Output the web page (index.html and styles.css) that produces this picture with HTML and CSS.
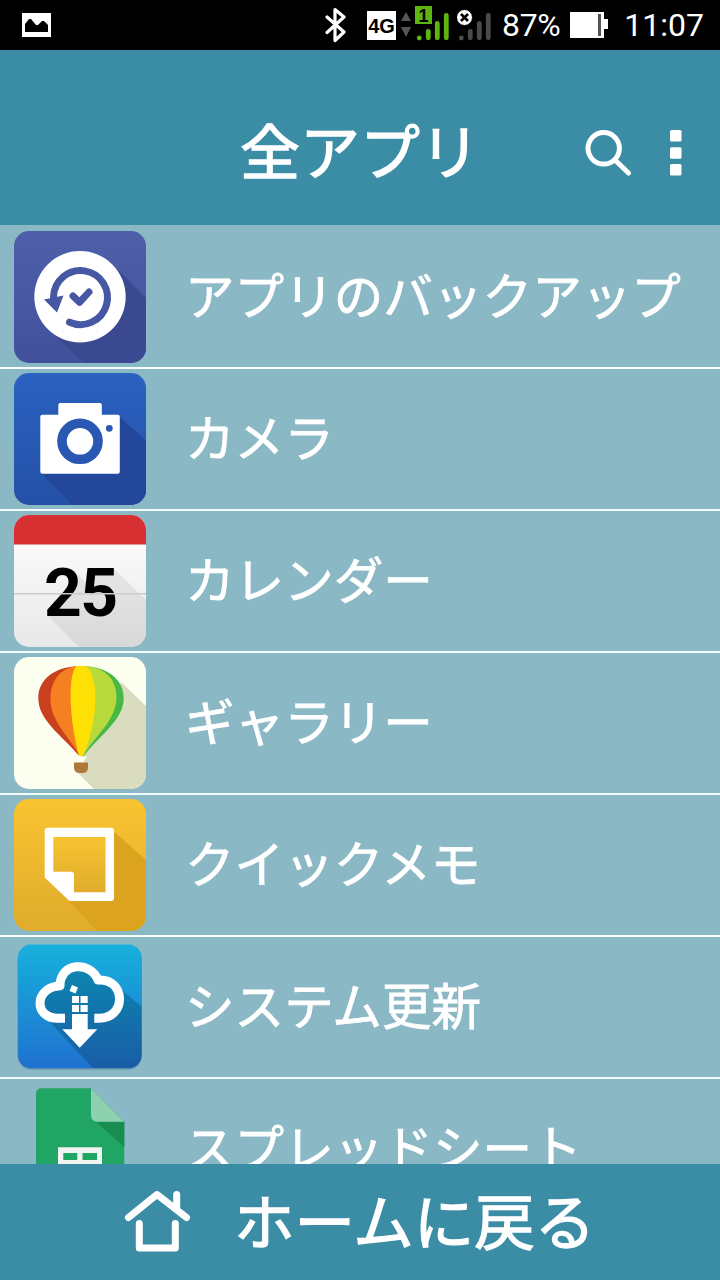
FILE: index.html
```html
<!DOCTYPE html>
<html lang="ja">
<head>
    <meta charset="UTF-8">
    <meta name="viewport" content="width=device-width, initial-scale=1.0">
    <title>全アプリ</title>
    <link rel="stylesheet" href="styles.css">
</head>
<body>
    <!-- Status bar -->
    <div class="status-bar">
        <svg class="picture-icon" width="29" height="24" viewBox="0 0 29 24">
            <path fill="#fff" fill-rule="evenodd" d="M0 0h29v24H0zM3 19h23v-7l-4-4h-2l-4 4h-2L9 6H7l-4 5z"/>
        </svg>
        <svg class="bluetooth-icon" width="22" height="36" viewBox="0 0 22 36">
            <path fill="none" stroke="#fff" stroke-width="3.2" stroke-linecap="round" stroke-linejoin="round" d="M2 10l17 15-9 8.500V2.500L19 10 2 25.500"/>
        </svg>
        <span class="network">4G</span>
        <svg class="arrows-icon" width="10" height="26" viewBox="0 0 10 26">
            <path fill="#555" d="M5 0l5 9H0zM0 15h10l-5 10z"/>
        </svg>
        <svg class="signal-icon" width="35" height="36" viewBox="0 0 35 36">
            <g stroke="#5fb50f" stroke-width="4.800" stroke-linecap="round">
                <path d="M4.300 31.800v.2M13.300 25.300v6.500M22.300 17.300v14.500M31.300 9.300v22.500"/>
            </g>
            <path fill="#5fb50f" d="M0 0h17v18H0z"/>
            <text class="sim-number" x="3.500" y="15.500">1</text>
        </svg>
        <svg class="signal-icon no-signal" width="35" height="36" viewBox="0 0 35 36">
            <g stroke="#4b4b4b" stroke-width="4.800" stroke-linecap="round">
                <path d="M4.300 31.800v.2M13.300 25.300v6.500M22.300 17.300v14.500M31.300 9.300v22.500"/>
            </g>
            <circle cx="7.500" cy="11.500" r="8" fill="#fff" stroke="#000"/>
            <path stroke="#000" stroke-width="2.600" d="M4 8l7 7M11 8l-7 7"/>
        </svg>
        <span class="percent">87%</span>
        <svg class="battery-icon" width="38" height="26" viewBox="0 0 38 26">
            <path fill="#fff" d="M0 0h34v7h4v10h-4v9H0z"/>
            <path fill="#555" d="M28 2h3v22h-3z"/>
        </svg>
        <span class="clock">11:07</span>
    </div>

    <!-- Page header with search and menu -->
    <header class="header">
        <h1>全アプリ</h1>
        <div class="actions">
            <svg width="48" height="48" viewBox="0 0 48 48">
                <g fill="none" stroke="#fff" stroke-width="5" stroke-linecap="round">
                    <circle cx="19.700" cy="19.300" r="15.700"/>
                    <path d="M31 31l13.500 13"/>
                </g>
            </svg>
            <svg width="12" height="46" viewBox="0 0 12 46">
                <g fill="#fff">
                    <rect width="11.500" height="11.500" rx="1.500"/>
                    <rect y="17.300" width="11.500" height="11.500" rx="1.500"/>
                    <rect y="34" width="11.500" height="11.500" rx="1.500"/>
                </g>
            </svg>
        </div>
    </header>

    <!-- App list -->
    <ul class="app-list">
        <li>
            <svg class="app-icon" viewBox="0 0 132 132">
                <defs>
                    <linearGradient id="indigo" x2="0" y2="1"><stop stop-color="#4f60ab"/><stop offset="1" stop-color="#41509c"/></linearGradient>
                </defs>
                <rect width="132" height="132" fill="url(#indigo)"/>
                <path fill="#3b4990" d="M98 33l34 34v65H70L34 98z"/>
                <circle cx="66" cy="65.700" r="45.700" fill="#fff"/>
                <g fill="none" stroke="#4657a3" stroke-width="7" stroke-linecap="round" stroke-linejoin="round">
                    <path d="M39.500 66a27 27 0 1 1 16 25.200"/>
                    <path d="M59 65l6.500 6.300L75 61"/>
                </g>
                <path fill="#4657a3" d="M30 68.500l19.500-4-6.500 17z"/>
            </svg>
            <span>アプリのバックアップ</span>
        </li>
        <li>
            <svg class="app-icon" viewBox="0 0 132 132">
                <defs>
                    <linearGradient id="blue" x2="0" y2="1"><stop stop-color="#2b61c1"/><stop offset="1" stop-color="#2451a7"/></linearGradient>
                </defs>
                <rect width="132" height="132" fill="url(#blue)"/>
                <path fill="#23489b" d="M105 43l27 25v64H58L27 100z"/>
                <path fill="#fff" d="M28.300 41.700h16V32a2 2 0 0 1 2-2h39.500a2 2 0 0 1 2 2v9.700h16a2 2 0 0 1 2 2v55a2 2 0 0 1-2 2H28.300a2 2 0 0 1-2-2v-55a2 2 0 0 1 2-2z"/>
                <circle cx="66" cy="68.300" r="18" fill="none" stroke="#2858b2" stroke-width="9.600"/>
                <circle cx="95.300" cy="55.300" r="3.400" fill="#2858b2"/>
            </svg>
            <span>カメラ</span>
        </li>
        <li>
            <svg class="app-icon" viewBox="0 0 132 132">
                <defs>
                    <linearGradient id="paper" x2="0" y2="1"><stop stop-color="#fff"/><stop offset="1" stop-color="#e8e8e8"/></linearGradient>
                    <linearGradient id="paper-shade" x2="0" y2="1"><stop stop-color="#e6e6e6"/><stop offset="1" stop-color="#d8d8d8"/></linearGradient>
                </defs>
                <rect width="132" height="132" fill="url(#paper)"/>
                <rect width="132" height="29.500" fill="#d63033"/>
                <path fill="url(#paper-shade)" d="M100 54l32 31v47H65L33 100l30-40 11 9 4-15z"/>
                <text class="date" x="30" y="100.500" textLength="74">25</text>
                <path stroke="#ccc" stroke-width="1.600" d="M0 78.700h132"/>
            </svg>
            <span>カレンダー</span>
        </li>
        <li>
            <svg class="app-icon" viewBox="0 0 132 132">
                <rect width="132" height="132" fill="#fcfff0"/>
                <path fill="#dadcbf" d="M107 25l25 24v83H80l-16-16 2-17z"/>
                <path fill="#fcfff0" d="M64 99.500h9l-4 6h-5z"/>
                <path fill="#c8401e" d="M67 9C40 9 24.300 23 24.300 41c0 22 22 36 41 58z"/>
                <path fill="#48b845" d="M67 9c27 0 42.700 14 42.700 32 0 22-23 36-40 58h-4z"/>
                <path fill="#f58021" d="M67 9C46 9 36.500 24 36.500 42c0 22 18 37 29.500 57h2z"/>
                <path fill="#b8d93c" d="M67 9c23 0 35.500 12 35.500 31 0 23-20 37-33.500 59h-3z"/>
                <path fill="#ffe005" d="M62 9h10c14 12 12 55-3 90h-4C56 66 53 21 62 9z"/>
                <path fill="#af7838" d="M60 105.500h14v5q0 5.500-6 5.500h-2q-6 0-6-5.500z"/>
            </svg>
            <span>ギャラリー</span>
        </li>
        <li>
            <svg class="app-icon" viewBox="0 0 132 132">
                <defs>
                    <linearGradient id="yellow" x2="0" y2="1"><stop stop-color="#f9c431"/><stop offset="1" stop-color="#dfac2c"/></linearGradient>
                    <linearGradient id="cloud-bg" x2="0" y2="1"><stop stop-color="#17b2dc"/><stop offset="1" stop-color="#1f6fcf"/></linearGradient>
                    <linearGradient id="cloud-shade" x2="0" y2="1"><stop stop-color="#0d86b0"/><stop offset="1" stop-color="#195ca6"/></linearGradient>
                </defs>
                <rect width="132" height="132" fill="url(#yellow)"/>
                <path fill="#dca31f" d="M99 32l33 29v71H83L55 102z"/>
                <path fill="url(#yellow)" d="M38 36h55v58H58L38 74z"/>
                <path fill="#fff" fill-rule="evenodd" d="M33.700 28.700H97a3 3 0 0 1 3 3V99a3 3 0 0 1-3 3H55.500L30.700 78.500V31.700a3 3 0 0 1 3-3zM39.300 38v34.700H57a3 3 0 0 1 3 3v17.600h31.500V38z"/>
            </svg>
            <span>クイックメモ</span>
        </li>
        <li>
            <svg class="app-icon plain" viewBox="0 0 132 132">
                <clipPath id="tile"><rect x="4" y="3.500" width="123.500" height="123.500" rx="13"/></clipPath>
                <rect x="3.500" y="5" width="124.500" height="123.500" rx="14" fill="#5990ac"/>
                <g clip-path="url(#tile)">
                    <rect width="132" height="132" fill="url(#cloud-bg)"/>
                    <path fill="url(#cloud-shade)" d="M38 48l10-2 8-15 20-3 10 12 18 6 24 20v62H80L32 77l-5-16z"/>
                </g>
                <path fill="none" stroke="#fff" stroke-width="9" d="M51 77.300h-7c-24 0-24-29.500 0-32.300l2-.3C46 21 77 20 84 39c28-2 29 38.300 1 38.300h-4.700"/>
                <g fill="#fff">
                    <path d="M58 55h7v7h-7zM66.500 55h7.200v7h-7.200zM58 64h7v7h-7zM66.500 64h7.200v7h-7.200zM58 44l6 2.500-2.500 6-6-2.500z"/>
                    <path d="M58 73h15.700v15.300h9.600l-17.600 18.500-17.400-18.500H58z"/>
                </g>
            </svg>
            <span>システム更新</span>
        </li>
        <li>
            <svg class="app-icon plain" viewBox="0 0 132 132">
                <path fill="#20a564" d="M27 5.300h50l33.300 33.400V127H27a5 5 0 0 1-5-5V10.300a5 5 0 0 1 5-5z"/>
                <path fill="#178d50" d="M82 38.700h28.300V64z"/>
                <path fill="#8ed1b1" d="M77 5.300l33.300 33.400H83a6 6 0 0 1-6-6z"/>
                <path fill="#f1f5f2" fill-rule="evenodd" d="M44 64.300h44V105H44zM49.300 70v7h14v-7zM68.500 70v7H83v-7z"/>
            </svg>
            <span>スプレッドシート</span>
        </li>
    </ul>

    <!-- Back to home button -->
    <footer class="footer">
        <svg width="68" height="64" viewBox="0 0 68 64">
            <path fill="none" stroke="#fff" stroke-width="7" stroke-linecap="round" stroke-linejoin="round" d="M4.500 27.500L33 4.500l29.500 23M52.700 4.500V19M15.300 33.500V58h36V33.500"/>
        </svg>
        <span>ホームに戻る</span>
    </footer>
</body>
</html>
```
FILE: styles.css
```css
/* General body styles */
body {
    margin: 0;
    height: 1280px;
    display: flex;
    flex-direction: column;
    overflow: hidden;
    background: #8bb8c5;
    color: #ffffff;
    font-family: "Noto Sans CJK JP", sans-serif;
}

svg {
    display: block;
    flex-shrink: 0;
}

/* Status bar */
.status-bar {
    height: 50px;
    flex-shrink: 0;
    display: flex;
    align-items: center;
    box-sizing: border-box;
    padding: 0 16px 0 22px;
    background: #000000;
    font-family: Roboto, sans-serif;
    font-size: 32px;
    line-height: 51px;
}

.bluetooth-icon {
    margin-left: 274px;
}

.network {
    width: 29px;
    height: 29px;
    margin-left: 20px;
    background: #ffffff;
    color: #000000;
    font-family: "Liberation Sans", sans-serif;
    font-size: 20px;
    font-weight: bold;
    line-height: 30px;
    text-align: center;
}

.arrows-icon {
    margin-left: 5px;
}

.signal-icon {
    margin: 0 0 2px 4px;
}

.no-signal {
    margin-left: 7px;
}

.sim-number {
    font-family: "Liberation Sans", sans-serif;
    font-size: 18px;
    font-weight: bold;
}

.percent {
    width: 60px;
    margin-left: 10px;
    letter-spacing: -0.3px;
}

.battery-icon {
    margin-left: 8px;
}

.clock {
    margin-left: auto;
}

/* Header with the title in the middle and the actions on the right */
.header {
    height: 175px;
    flex-shrink: 0;
    display: grid;
    grid-template-columns: 1fr auto 1fr;
    align-items: center;
    box-sizing: border-box;
    padding: 30px 38px 0;
    background: #3b8da6;
}

h1 {
    grid-column: 2;
    margin: 0;
    padding-bottom: 7px;
    font-size: 60px;
    font-weight: 400;
    line-height: 80px;
    -webkit-text-stroke: 1.3px #ffffff; /* Softens and thickens the letters */
    stroke-linejoin: round;
}

.actions {
    display: flex;
    justify-content: flex-end;
    align-items: center;
    gap: 38px;
}

/* App list */
.app-list {
    flex: 1;
    min-height: 0;
    overflow: hidden;
    margin: 0;
    padding: 2px 0 0;
    list-style: none;
}

.app-list li {
    height: 140px;
    display: flex;
    align-items: center;
    gap: 39px;
    padding-left: 14px;
    border-bottom: 2px solid #f4fcfd;
    font-size: 49.6px;
    line-height: 70px;
    white-space: nowrap;
    -webkit-text-stroke: 0.8px #ffffff;
    stroke-linejoin: round;
}

.app-list li span {
    padding-bottom: 9px; /* Labels sit a little above the middle */
}

.app-icon {
    width: 132px;
    height: 132px;
    border-radius: 15px;
}

.plain {
    border-radius: 0;
}

.date {
    font-family: Roboto, sans-serif;
    font-size: 66px;
    font-weight: bold;
    -webkit-text-stroke: 0;
}

/* Footer button */
.footer {
    height: 116px;
    flex-shrink: 0;
    display: flex;
    align-items: center;
    gap: 42px;
    padding-left: 124px;
    background: #3b8da6;
    font-size: 60.5px;
    line-height: 80px;
    -webkit-text-stroke: 1.3px #ffffff;
    stroke-linejoin: round;
}

.footer span {
    padding-bottom: 7px;
}
```
